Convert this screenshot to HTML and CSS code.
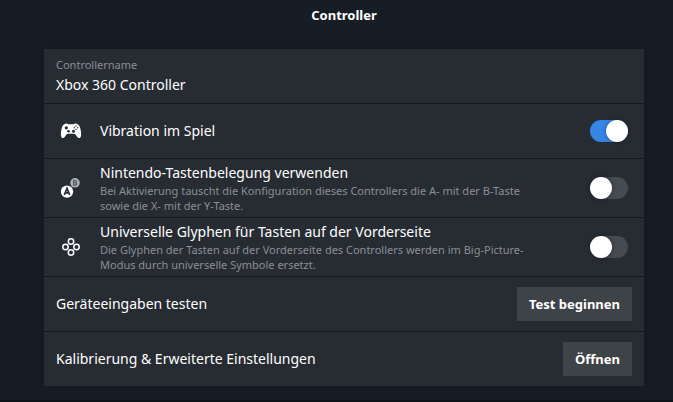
FILE: index.html
```
<!DOCTYPE html>
<html lang="de">
<head>
    <meta charset="UTF-8">
    <meta name="viewport" content="width=device-width, initial-scale=1.0">
    <title>Controller</title>
    <link rel="stylesheet" href="styles.css">
</head>
<body>
    <main class="page">
        <h1>Controller</h1>

        <div class="panel">
            <!-- Name -->
            <div class="row name-row">
                <label for="controllerName">Controllername</label>
                <input type="text" id="controllerName" value="Xbox 360 Controller">
            </div>

            <!-- Schalter -->
            <div class="row">
                <svg class="icon" viewBox="0 0 24 24" aria-hidden="true">
                    <path fill="#fff" fill-rule="evenodd" d="M6 5c1.200-.7 2.400-.5 3.200.3h5.600c.8-.8 2-1 3.200-.3 1.500.4 2.200 1.300 2.700 2.500.9 2.300 1.500 5.700 1.400 8.500 0 2.400-1.700 4-3.300 2.600-1.300-1.200-2-3.600-3.600-3.900H8.800c-1.600.3-2.300 2.700-3.600 3.900C3.600 20 1.900 18.400 1.900 16c-.1-2.800.5-6.200 1.400-8.500C3.800 6.300 4.500 5.400 6 5z"/>
                    <g fill="#272c33">
                        <circle cx="7.300" cy="8.800" r="1.600"/>
                        <circle cx="9.500" cy="12.200" r="1.300"/>
                        <circle cx="14.500" cy="12.200" r="1.500"/>
                        <circle cx="17" cy="7" r=".7"/>
                        <circle cx="15.300" cy="8.700" r=".7"/>
                        <circle cx="18.700" cy="8.700" r=".7"/>
                        <circle cx="17" cy="10.400" r=".7"/>
                    </g>
                </svg>
                <label class="text" for="vibration">Vibration im Spiel</label>
                <input type="checkbox" class="switch" id="vibration" checked>
            </div>

            <div class="row">
                <svg class="icon" viewBox="0 0 24 24" aria-hidden="true">
                    <circle cx="16" cy="6.800" r="4.800" fill="#a9acb0"/>
                    <circle cx="8" cy="15.600" r="6.200" fill="#fff"/>
                    <path fill="none" stroke="#272c33" stroke-width="1.700" d="M5.300 19 8 12.200l2.700 6.800M6.300 16.900h3.400"/>
                    <path fill="none" stroke="#50545a" stroke-width="1.100" d="M14.700 4.500v4.600h1.700a1.200 1.200 0 0 0 0-2.400h-1.700 1.500a1.100 1.100 0 0 0 0-2.200z"/>
                </svg>
                <div class="text">
                    <label for="nintendo">Nintendo-Tastenbelegung verwenden</label>
                    <p>Bei Aktivierung tauscht die Konfiguration dieses Controllers die A- mit der B-Taste sowie die X- mit der Y-Taste.</p>
                </div>
                <input type="checkbox" class="switch" id="nintendo">
            </div>

            <div class="row">
                <svg class="icon" viewBox="0 0 24 24" fill="none" stroke="#fff" stroke-width="1.500" aria-hidden="true">
                    <circle cx="12" cy="6.500" r="2.700"/>
                    <circle cx="6.500" cy="12" r="2.700"/>
                    <circle cx="17.500" cy="12" r="2.700"/>
                    <circle cx="12" cy="17.500" r="2.700"/>
                </svg>
                <div class="text">
                    <label for="glyphs">Universelle Glyphen für Tasten auf der Vorderseite</label>
                    <p>Die Glyphen der Tasten auf der Vorderseite des Controllers werden im Big-Picture-Modus durch universelle Symbole ersetzt.</p>
                </div>
                <input type="checkbox" class="switch" id="glyphs">
            </div>

            <!-- Aktionen -->
            <div class="row">
                <span class="action">Geräteeingaben testen</span>
                <button type="button">Test beginnen</button>
            </div>

            <div class="row">
                <span class="action">Kalibrierung &amp; Erweiterte Einstellungen</span>
                <button type="button">Öffnen</button>
            </div>
        </div>
    </main>
</body>
</html>
```

FILE: styles.css
```
* {
    box-sizing: border-box;
}

body {
    font-family: "Noto Sans", sans-serif;
    background-color: #171d25;
    margin: 0;
    color: #fff;
    font-size: 14px;
    line-height: 20px;
}

.page {
    padding: 5px 29px 14px 44px;
    border-bottom: 2px solid #0e1219;
}

h1 {
    margin: 0 0 24px;
    font-size: 13px;
    line-height: 20px;
    font-weight: 700;
    text-align: center;
}

.panel {
    background-color: #272c33;
    box-shadow: 0 0 12px rgba(0, 0, 0, 0.2);
}

.row {
    display: flex;
    align-items: center;
    min-height: 55px;
    padding: 4px 12px;
    border-bottom: 1px solid #12161d;
}

.row:last-child {
    min-height: 54px;
    border-bottom: none;
}

/* Controllername */
.name-row {
    flex-direction: column;
    align-items: stretch;
    justify-content: center;
}

.name-row label {
    font-size: 11px;
    line-height: 16px;
    color: #8b8e93;
}

.name-row input {
    width: 100%;
    height: 22px;
    padding: 0;
    border: none;
    background: none;
    color: #fff;
    font: inherit;
}

.icon {
    flex: none;
    width: 24px;
    height: 24px;
    margin: 0 17px 0 3px;
}

.text {
    flex: 1;
    padding-right: 48px;
}

.text p {
    margin: 0;
    font-size: 11px;
    line-height: 15px;
    color: #8b8e93;
}

.action {
    flex: 1;
}

/* Schalter */
.switch {
    appearance: none;
    flex: none;
    display: flex;
    width: 38px;
    height: 22px;
    margin: 0 4px 0 0;
    border-radius: 11px;
    background-color: #464a51;
    cursor: pointer;
}

.switch::before {
    content: "";
    width: 22px;
    height: 22px;
    border-radius: 50%;
    background-color: #fff;
    box-shadow: 0 0 4px rgba(0, 0, 0, 0.4);
}

.switch:checked {
    justify-content: flex-end;
    background-color: #3585e5;
}

button {
    height: 34px;
    padding: 0 12px;
    border: none;
    background-color: #3e4347;
    color: #fff;
    font-family: inherit;
    font-size: 13px;
    font-weight: 700;
    cursor: pointer;
}

button:hover {
    background-color: #50555a;
}
```
